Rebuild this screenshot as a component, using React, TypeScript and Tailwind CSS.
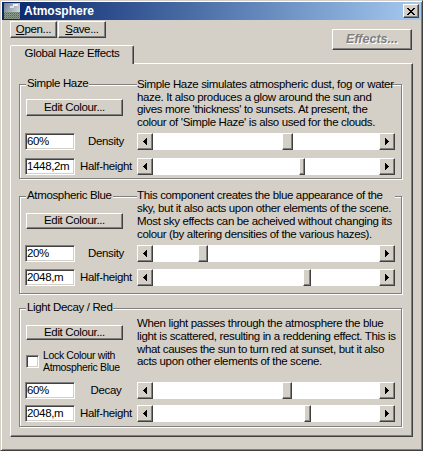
import React from 'react';

const uiFont = "font-['Liberation_Sans','Arial',sans-serif]";
const raised =
  'border border-t-white border-l-white border-r-[#404040] border-b-[#404040] shadow-[inset_-1px_-1px_0_#808080] bg-[#d4d0c8]';
const sunken =
  'border border-t-[#808080] border-l-[#808080] border-r-white border-b-white shadow-[inset_1px_1px_0_#404040,inset_-1px_-1px_0_#d4d0c8]';

function AppIcon() {
  return (
    <svg width="16" height="16" viewBox="0 0 16 16" shapeRendering="crispEdges">
      <defs>
        <linearGradient id="sky" x1="0" y1="0" x2="1" y2="0.6">
          <stop offset="0" stopColor="#6f7f90" />
          <stop offset="1" stopColor="#d8dde2" />
        </linearGradient>
        <pattern id="grass" width="2" height="2" patternUnits="userSpaceOnUse">
          <rect width="2" height="2" fill="#8a9a8a" />
          <rect width="1" height="1" fill="#1f8f1f" />
          <rect x="1" y="1" width="1" height="1" fill="#3caa3c" />
        </pattern>
      </defs>
      <rect width="16" height="16" fill="url(#sky)" />
      <rect x="9" y="1" width="5" height="2" fill="#f2f2f2" />
      <rect x="6" y="3" width="4" height="2" fill="#e0e4e8" />
      <rect x="0" y="9" width="16" height="7" fill="url(#grass)" />
    </svg>
  );
}

function CloseGlyph() {
  const px = [
    [0, 0], [1, 0], [6, 0], [7, 0],
    [1, 1], [2, 1], [5, 1], [6, 1],
    [2, 2], [3, 2], [4, 2], [5, 2],
    [3, 3], [4, 3],
    [2, 4], [3, 4], [4, 4], [5, 4],
    [1, 5], [2, 5], [5, 5], [6, 5],
    [0, 6], [1, 6], [6, 6], [7, 6],
  ];
  return (
    <svg width="8" height="7" viewBox="0 0 8 7" shapeRendering="crispEdges">
      {px.map(([x, y]) => (
        <rect key={`${x}-${y}`} x={x} y={y} width="1" height="1" fill="#000" />
      ))}
    </svg>
  );
}

function Arrow({ dir }: { dir: 'left' | 'right' }) {
  return (
    <svg width="4" height="7" viewBox="0 0 4 7" shapeRendering="crispEdges">
      {dir === 'left' ? (
        <path d="M3 0h1v7h-1zM2 1h1v5h-1zM1 2h1v3h-1zM0 3h1v1h-1z" fill="#000" />
      ) : (
        <path d="M0 0h1v7h-1zM1 1h1v5h-1zM2 2h1v3h-1zM3 3h1v1h-1z" fill="#000" />
      )}
    </svg>
  );
}

function ScrollBar({ offset, thumb }: { offset: string; thumb: string }) {
  return (
    <div className="flex h-[17px] w-[258px]">
      <div className={`${raised} flex w-[16px] shrink-0 items-center justify-center`}>
        <Arrow dir="left" />
      </div>
      <div className="flex flex-1 bg-white">
        <div className={`${offset} shrink-0`} />
        <div className={`${raised} ${thumb} h-full shrink-0`} />
      </div>
      <div className={`${raised} flex w-[16px] shrink-0 items-center justify-center`}>
        <Arrow dir="right" />
      </div>
    </div>
  );
}

function Row({
  value,
  label,
  offset,
  thumb,
  className = '',
}: {
  value: string;
  label: string;
  offset: string;
  thumb: string;
  className?: string;
}) {
  return (
    <div className={`flex h-[17px] items-center ${className}`}>
      <div className={`${sunken} ml-[5px] h-[17px] w-[50px] bg-white pl-[1px] leading-[15px]`}>{value}</div>
      <div className="w-[62px] text-center leading-[15px]">{label}</div>
      <ScrollBar offset={offset} thumb={thumb} />
    </div>
  );
}

function Group({
  title,
  className,
  children,
}: {
  title: string;
  className: string;
  children: React.ReactNode;
}) {
  return (
    <div
      className={`relative ml-[8px] w-[383px] border border-[#808080] shadow-[inset_1px_1px_0_#fff,1px_1px_0_#fff] ${className}`}
    >
      <span className="absolute left-[6px] -top-[8px] bg-[#d4d0c8] px-[1px] leading-[13px] whitespace-nowrap">
        {title}
      </span>
      {children}
    </div>
  );
}

function EditButton({ className }: { className: string }) {
  return (
    <div className={`${raised} ml-[6px] flex w-[97px] items-center justify-center ${className}`}>
      Edit Colour...
    </div>
  );
}

export default function App() {
  return (
    <div
      className={`${uiFont} text-[11.5px] tracking-[-0.35px] text-black h-[451px] w-[423px] overflow-hidden border border-t-[#d4d0c8] border-l-[#d4d0c8] border-r-[#404040] border-b-[#404040] bg-[#d4d0c8] p-[1px] shadow-[inset_1px_1px_0_#fff,inset_-1px_-1px_0_#808080]`}
    >
      {/* title bar */}
      <div className="flex h-[18px] items-center bg-linear-to-r from-[#0a246a] to-[#a6caf0] pl-[2px] pr-[2px]">
        <AppIcon />
        <span className="ml-[4px] text-[12px] font-bold leading-none tracking-normal text-white">
          Atmosphere
        </span>
        <div className={`${raised} ml-auto flex h-[14px] w-[16px] items-center justify-center`}>
          <CloseGlyph />
        </div>
      </div>

      <div className="px-[8px]">
        {/* toolbar + tab */}
        <div className="flex h-[43px] items-start justify-between">
          <div className="flex flex-col">
            <div className="mt-[1px] flex gap-[1px]">
              <div className={`${raised} flex h-[17px] w-[47px] items-center justify-center`}>
                <span>
                  <span className="underline">O</span>pen...
                </span>
              </div>
              <div className={`${raised} flex h-[17px] w-[48px] items-center justify-center`}>
                <span>
                  <span className="underline">S</span>ave...
                </span>
              </div>
            </div>
            <div className="relative z-10 mt-[7px] flex h-[19px] w-[124px] items-center justify-center rounded-t-[2px] border-l border-t border-r border-l-white border-t-white border-r-[#404040] bg-[#d4d0c8] pb-[2px] shadow-[inset_-1px_0_0_#808080]">
              Global Haze Effects
            </div>
          </div>
          <div
            className={`${raised} mr-[1px] mt-[9px] flex h-[21px] w-[80px] items-center justify-center text-[12.5px] font-bold italic tracking-normal text-[#808080] [text-shadow:1px_1px_0_#fff]`}
          >
            Effects...
          </div>
        </div>

        {/* tab panel */}
        <div className="flex h-[374px] flex-col border border-t-white border-l-white border-r-[#404040] border-b-[#404040] shadow-[inset_-1px_-1px_0_#808080]">
          {/* Simple Haze */}
          <Group title="Simple Haze" className="mt-[20px] h-[95px]">
            <div className="flex h-[44px]">
              <div className="w-[117px] shrink-0">
                <EditButton className="mt-[14px] h-[17px]" />
              </div>
              <div className="-mt-[7px] h-[51px] w-[252px] bg-[#d4d0c8] leading-[12.6px] whitespace-nowrap">
                Simple Haze simulates atmospheric dust, fog or water
                <br />
                haze. It also produces a glow around the sun and
                <br />
                gives more 'thickness' to sunsets. At present, the
                <br />
                colour of 'Simple Haze' is also used for the clouds.
              </div>
            </div>
            <Row className="mt-[4px]" value="60%" label="Density" offset="w-[129px]" thumb="w-[11px]" />
            <Row className="mt-[8px]" value="1448,2m" label="Half-height" offset="w-[146px]" thumb="w-[6px]" />
          </Group>

          {/* Atmospheric Blue */}
          <Group title="Atmospheric Blue" className="mt-[17px] h-[98px]">
            <div className="flex h-[48px]">
              <div className="w-[117px] shrink-0">
                <EditButton className="mt-[16px] h-[16px]" />
              </div>
              <div className="-mt-[8px] h-[53px] w-[258px] bg-[#d4d0c8] leading-[13px] whitespace-nowrap">
                This component creates the blue appearance of the
                <br />
                sky, but it also acts upon other elements of the scene.
                <br />
                Most sky effects can be acheived without changing its
                <br />
                colour (by altering densities of the various hazes).
              </div>
            </div>
            <Row value="20%" label="Density" offset="w-[45px]" thumb="w-[10px]" />
            <Row className="mt-[7px]" value="2048,m" label="Half-height" offset="w-[150px]" thumb="w-[8px]" />
          </Group>

          {/* Light Decay / Red */}
          <Group title="Light Decay / Red" className="mt-[14px] h-[119px]">
            <div className="flex h-[73px]">
              <div className="w-[117px] shrink-0">
                <EditButton className="mt-[16px] h-[15px]" />
                <div className="ml-[6px] mt-[10px] flex items-center">
                  <div className={`${sunken} h-[13px] w-[13px] shrink-0 bg-white`} />
                  <div className="ml-[4px] text-[10.5px] leading-[11.5px] tracking-[-0.35px] whitespace-nowrap">
                    Lock Colour with
                    <br />
                    Atmospheric Blue
                  </div>
                </div>
              </div>
              <div className="mt-[8px] w-[258px] leading-[12.8px] whitespace-nowrap">
                When light passes through the atmosphere the blue
                <br />
                light is scattered, resulting in a reddening effect. This is
                <br />
                what causes the sun to turn red at sunset, but it also
                <br />
                acts upon other elements of the scene.
              </div>
            </div>
            <Row value="60%" label="Decay" offset="w-[129px]" thumb="w-[10px]" />
            <Row className="mt-[6px]" value="2048,m" label="Half-height" offset="w-[151px]" thumb="w-[7px]" />
          </Group>
        </div>
      </div>
    </div>
  );
}
